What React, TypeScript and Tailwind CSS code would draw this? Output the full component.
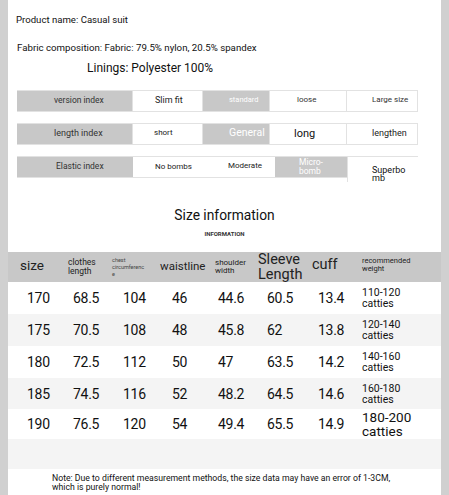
import React from "react";

const font = { fontFamily: 'Roboto, "Noto Sans", sans-serif' };

type Cell = { text: React.ReactNode; cls: string };

const indexRows: Cell[][] = [
  [
    { text: "version index", cls: "w-[116px] bg-[#c8c8c8] pl-[37px] text-[8.5px] text-[#333]" },
    { text: "Slim fit", cls: "w-[70px] bg-white pl-[22px] text-[9px] text-[#222]" },
    { text: "standard", cls: "w-[67px] bg-[#c8c8c8] pl-[26px] text-[7.5px] text-white" },
    { text: "loose", cls: "w-[77px] bg-white pl-[27px] text-[8px] text-[#333]" },
    { text: "Large size", cls: "w-[71px] bg-white pl-[25px] text-[8px] text-[#333]" },
  ],
  [
    { text: "length index", cls: "w-[116px] bg-[#c8c8c8] pl-[37px] text-[9px] text-[#333]" },
    { text: "short", cls: "w-[70px] bg-white pl-[21px] text-[8px] text-[#222]" },
    { text: "General", cls: "w-[67px] bg-[#c8c8c8] pl-[26px] text-[10.5px] text-white" },
    { text: "long", cls: "w-[77px] bg-white pl-[24px] text-[11px] text-[#111]" },
    { text: "lengthen", cls: "w-[71px] bg-white pl-[25px] text-[9px] text-[#222]" },
  ],
];

function IndexRow({ cells }: { cells: Cell[] }) {
  return (
    <div className="flex h-[22px] border-y border-[#e2e2e2] w-[401px]">
      {cells.map((c, i) => (
        <div
          key={i}
          className={`flex items-center border-r border-[#e2e2e2] leading-none pb-[2px] ${c.cls}`}
        >
          {c.text}
        </div>
      ))}
    </div>
  );
}

const colW = ["w-[54px]", "w-[48px]", "w-[45px]", "w-[55px]", "w-[45px]", "w-[53px]", "w-[47px]", "w-[86px]"];
const numPad = ["pl-[19px]", "pl-[11px]", "pl-[13px]", "pl-[17px]", "pl-[8px]", "pl-[12px]", "pl-[10px]", "pl-[7px]"];

const rows = [
  ["170", "68.5", "104", "46", "44.6", "60.5", "13.4", "110-120"],
  ["175", "70.5", "108", "48", "45.8", "62", "13.8", "120-140"],
  ["180", "72.5", "112", "50", "47", "63.5", "14.2", "140-160"],
  ["185", "74.5", "116", "52", "48.2", "64.5", "14.6", "160-180"],
  ["190", "76.5", "120", "54", "49.4", "65.5", "14.9", "180-200"],
];

export default function App() {
  return (
    <div className="w-[449px] h-[495px] bg-[#d0d0d0] px-[8px]" style={font}>
      <div className="h-full bg-white overflow-hidden">
        <div className="pt-[14px] pl-[8px] text-[9.6px] leading-[12px] text-[#111]">
          Product name: Casual suit
        </div>
        <div className="pt-[16px] pl-[9px] text-[9.7px] leading-[12px] text-[#111]">
          Fabric composition: Fabric: 79.5% nylon, 20.5% spandex
        </div>
        <div className="pt-[7px] pl-[79px] text-[12px] leading-[14px] text-[#111]">
          Linings: Polyester 100%
        </div>

        <div className="pt-[15px] pl-[9px] flex flex-col gap-[11px]">
          <IndexRow cells={indexRows[0]} />
          <IndexRow cells={indexRows[1]} />
          <div className="flex h-[22px] border-y border-[#e2e2e2] w-[401px]">
            <div className="flex items-center w-[116px] bg-[#c8c8c8] pl-[39px] pb-[2px] text-[8.5px] leading-none text-[#333]">
              Elastic index
            </div>
            <div className="flex items-center w-[77px] bg-white pl-[22px] text-[8px] leading-none text-[#222]">
              No bombs
            </div>
            <div className="flex items-center w-[65px] bg-white pl-[18px] pb-[2px] text-[8px] leading-none text-[#222]">
              Moderate
            </div>
            <div className="flex flex-col justify-center w-[72px] bg-[#c8c8c8] pl-[24px] text-[8.5px] leading-[9px] text-white">
              <span>Micro-</span>
              <span>bomb</span>
            </div>
            <div className="flex flex-col justify-end w-[71px] bg-white border-l border-[#e2e2e2] pl-[24px] -mb-[5px] text-[9px] leading-[8px] text-[#111]">
              <span>Superbo</span>
              <span>mb</span>
            </div>
          </div>
        </div>

        <div className="pt-[29px] text-center text-[13.8px] leading-[16px] text-[#111]">
          Size information
        </div>
        <div className="pt-[7px] text-center text-[6px] leading-[7px] font-bold text-[#333]">
          INFORMATION
        </div>

        <div className="mt-[15px] flex h-[30px] items-center bg-[#c8c8c8] text-[#222]">
          <div className={`${colW[0]} pl-[12px] text-[13.5px] leading-none pb-[2px]`}>size</div>
          <div className={`${colW[1]} pl-[6px] text-[8.5px] leading-[9px]`}>
            clothes
            <br />
            length
          </div>
          <div className={`${colW[2]} pl-[2px] text-[5.5px] leading-[7px] text-[#444]`}>
            chest
            <br />
            circumferenc
            <br />e
          </div>
          <div className={`${colW[3]} pl-[5px] text-[11.5px] leading-none`}>waistline</div>
          <div className={`${colW[4]} pl-[5px] text-[8px] leading-[8px]`}>
            shoulder
            <br />
            width
          </div>
          <div className={`${colW[5]} pl-[3px] text-[14.5px] leading-[15px]`}>
            Sleeve
            <br />
            Length
          </div>
          <div className={`${colW[6]} pl-[4px] text-[14.5px] leading-none pb-[3px]`}>cuff</div>
          <div className={`${colW[7]} pl-[7px] text-[7.5px] leading-[8px] pb-[4px]`}>
            recommended
            <br />
            weight
          </div>
        </div>

        {rows.map((r, ri) => (
          <div
            key={ri}
            className={`flex items-center ${ri === 4 ? "h-[30px]" : ri === 3 ? "h-[31px]" : "h-[32px]"} ${ri % 2 === 1 ? "bg-[#f4f4f4]" : "bg-white"} text-[#111]`}
          >
            {r.slice(0, 7).map((v, ci) => (
              <div key={ci} className={`${colW[ci]} ${numPad[ci]} text-[14px] leading-none tracking-[-0.3px]`}>
                {v}
              </div>
            ))}
            <div
              className={`${colW[7]} ${numPad[7]} ${ri === 4 ? "text-[13.5px] leading-[14px]" : "text-[10.5px] leading-[11px]"}`}
            >
              {r[7]}
              <br />
              catties
            </div>
          </div>
        ))}

        <div className="h-[30px] bg-[#f4f4f4]" />
        <div className="pt-[5px] pl-[44px] text-[8.7px] leading-[9px] text-[#111]">
          Note: Due to different measurement methods, the size data may have an error of 1-3CM,
          <br />
          which is purely normal!
        </div>
      </div>
    </div>
  );
}
